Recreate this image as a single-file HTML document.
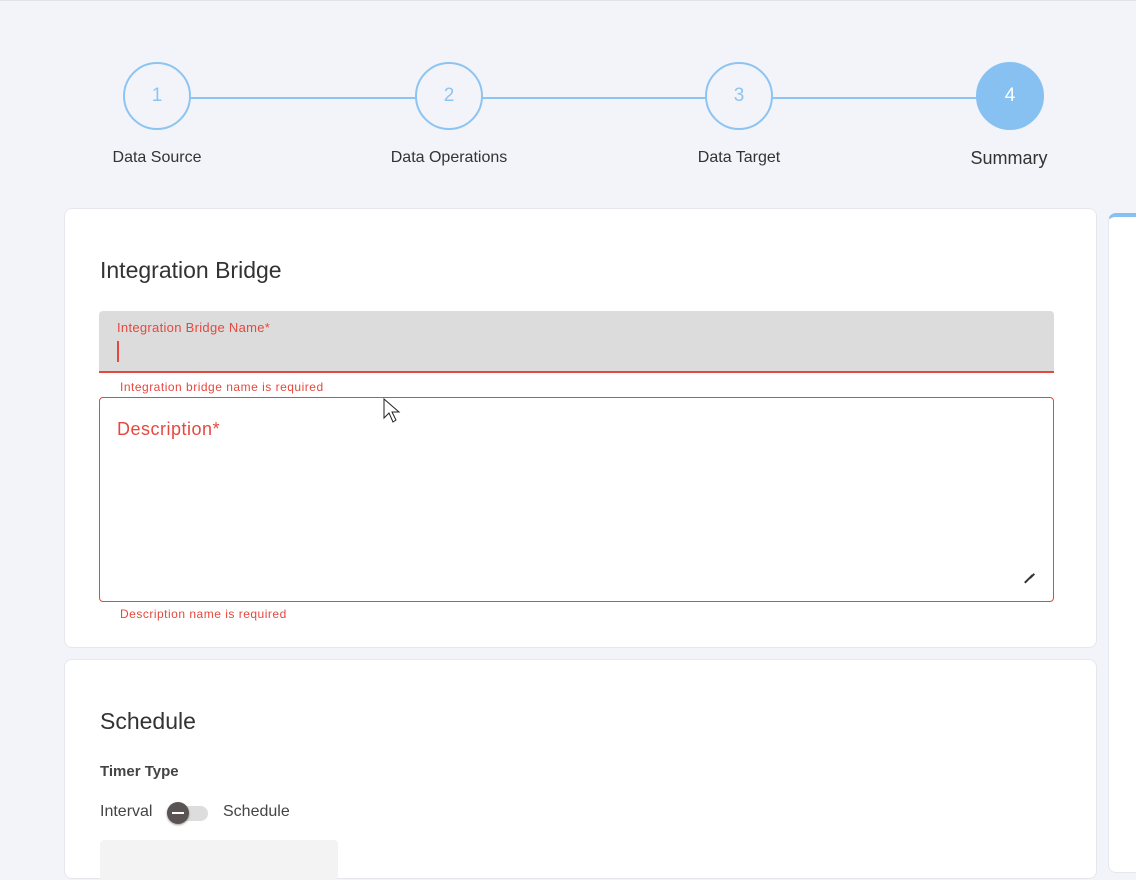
<!DOCTYPE html>
<html><head><meta charset="utf-8"><style>
*{box-sizing:border-box;margin:0;padding:0}
body{width:1136px;height:852px;overflow:hidden;background:#f3f4f9;font-family:"Liberation Sans",sans-serif;position:relative}
.top{position:absolute;left:0;top:0;width:1136px;height:1px;background:#e2e3e8}
.c{position:absolute;width:68px;height:68px;border-radius:50%;border:2px solid #8cc4f2;color:#8cc4f2;font-size:19px;display:flex;align-items:center;justify-content:center;background:#f3f4f9}
.c.f{background:#86c1f1;border-color:#86c1f1;color:#fff}
.ln{position:absolute;top:97px;height:2px;background:#8cc4f2}
.lb{position:absolute;top:149px;font-size:16px;color:#333;transform:translateX(-50%);white-space:nowrap}
.card{position:absolute;background:#fff;border:1px solid #e6e7ec;border-radius:8px}
.red{color:#e5483e}
.err{font-size:12px;letter-spacing:0.5px}
</style></head><body>
<div class="top"></div>
<div class="ln" style="left:190px;width:226px"></div>
<div class="ln" style="left:482px;width:224px"></div>
<div class="ln" style="left:772px;width:205px"></div>
<div class="c" style="left:123px;top:62px">1</div>
<div class="c" style="left:415px;top:62px">2</div>
<div class="c" style="left:705px;top:62px">3</div>
<div class="c f" style="left:976px;top:62px">4</div>
<div class="lb" style="left:157px">Data Source</div>
<div class="lb" style="left:449px">Data Operations</div>
<div class="lb" style="left:739px">Data Target</div>
<div class="lb" style="left:1009px;font-size:18px;top:148px">Summary</div>

<div class="card" style="left:64px;top:208px;width:1033px;height:440px">
 <div style="position:absolute;left:35px;top:48px;font-size:23px;color:#333">Integration Bridge</div>
 <div style="position:absolute;left:34px;top:102px;width:955px;height:62px;background:#dcdcdc;border-radius:4px 4px 0 0;border-bottom:2px solid #e5483e">
  <div class="red" style="position:absolute;left:18px;top:9px;font-size:13px;letter-spacing:0.3px">Integration Bridge Name*</div>
  <div style="position:absolute;left:18px;top:30px;width:2px;height:21px;background:#e5483e"></div>
 </div>
 <div class="red err" style="position:absolute;left:55px;top:171px">Integration bridge name is required</div>
 <div style="position:absolute;left:34px;top:188px;width:955px;height:205px;border:1px solid #e5483e;border-radius:4px">
  <div class="red" style="position:absolute;left:17px;top:21px;font-size:18px;letter-spacing:0.5px">Description*</div>
  <div style="position:absolute;right:19px;bottom:22px;width:11px;height:1.5px;background:#333;transform:rotate(-45deg)"></div>
  <div style="position:absolute;right:18px;bottom:25px;width:6px;height:1.5px;background:#333;transform:rotate(-45deg)"></div>
 </div>
 <div class="red err" style="position:absolute;left:55px;top:398px">Description name is required</div>
</div>

<div class="card" style="left:64px;top:659px;width:1033px;height:220px">
 <div style="position:absolute;left:35px;top:48px;font-size:23px;color:#333">Schedule</div>
 <div style="position:absolute;left:35px;top:103px;font-size:15px;font-weight:bold;color:#444">Timer Type</div>
 <div style="position:absolute;left:35px;top:143px;font-size:16px;color:#444">Interval</div>
 <div style="position:absolute;left:107px;top:146px;width:36px;height:15px;border-radius:8px;background:#ddd"></div>
 <div style="position:absolute;left:102px;top:142px;width:22px;height:22px;border-radius:50%;background:#5a5353;box-shadow:0 1px 2px rgba(0,0,0,.4)"><div style="position:absolute;left:5px;top:10px;width:12px;height:2px;background:#fff"></div></div>
 <div style="position:absolute;left:158px;top:143px;font-size:16px;color:#444">Schedule</div>
 <div style="position:absolute;left:35px;top:180px;width:238px;height:40px;background:#f3f3f3;border-radius:4px"></div>
</div>

<div class="card" style="left:1108px;top:213px;width:60px;height:660px;border-top:4px solid #86c1f1;border-radius:8px"></div>
<svg style="position:absolute;left:383px;top:398px" width="20" height="30" viewBox="0 0 20 30"><path d="M1 1 L1 20 L6 15 L10 24 L13 22 L9 14 L16 14 Z" fill="#fff" stroke="#222" stroke-width="1"/></svg>
</body></html>
